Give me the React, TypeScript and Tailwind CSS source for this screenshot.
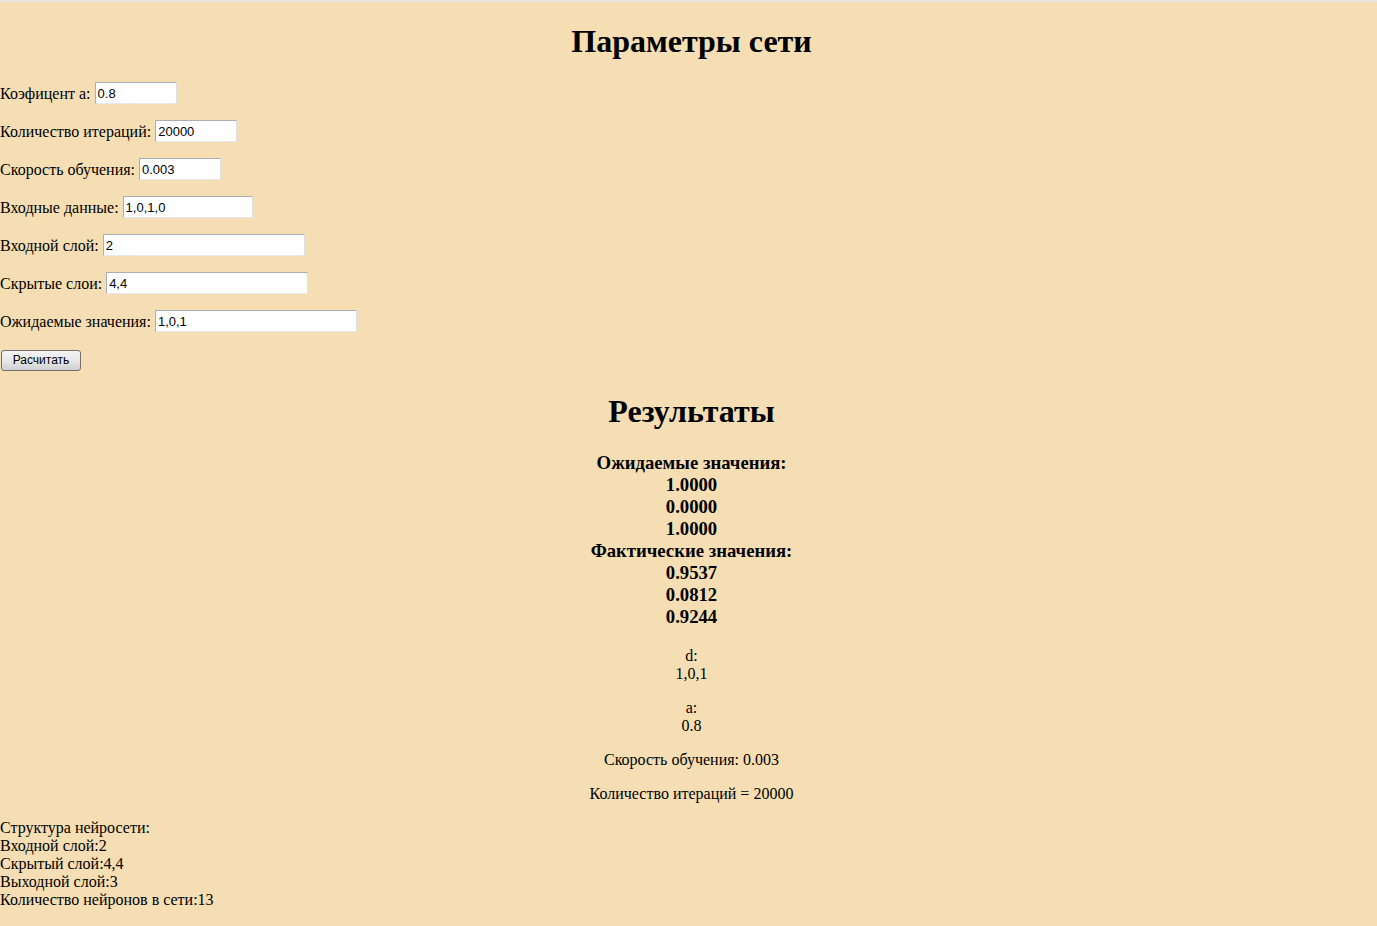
import React from "react";

const serif = "font-['Liberation_Serif','Times_New_Roman',serif]";
const inputCls =
  "h-[22px] border border-t-[#abadb3] border-l-[#abadb3] border-r-[#dbdfe6] border-b-[#e3e9ef] bg-white px-[2px] pt-px text-[13px] text-black font-['Liberation_Sans',Arial,sans-serif] outline-none";

const params = [
  { label: "Коэфицент а:", value: "0.8", w: "w-[82px]" },
  { label: "Количество итераций:", value: "20000", w: "w-[82px]" },
  { label: "Скорость обучения:", value: "0.003", w: "w-[82px]" },
  { label: "Входные данные:", value: "1,0,1,0", w: "w-[130px]" },
  { label: "Входной слой:", value: "2", w: "w-[202px]" },
  { label: "Скрытые слои:", value: "4,4", w: "w-[202px]" },
  { label: "Ожидаемые значения:", value: "1,0,1", w: "w-[202px]" },
];

export default function App() {
  return (
    <div className={`min-h-[926px] bg-[#f5deb3] border-t-2 border-[#e4e4e4] text-black text-[16px] ${serif}`}>
      <h1 className="mt-[21px] mb-[22px] pl-[6px] text-center text-[32px] font-bold leading-[37px]">
        Параметры сети
      </h1>

      <div className="flex flex-col gap-4">
        {params.map((p) => (
          <p key={p.label} className="h-[22px] flex items-center gap-[4px] leading-[22px]">
            <span className="mt-[2px]">{p.label}</span>
            <input className={`${inputCls} ${p.w}`} defaultValue={p.value} />
          </p>
        ))}
        <p className="h-[24px] flex items-center pl-px">
          <button className="h-[21px] w-[80px] rounded-[3px] border border-[#707070] bg-gradient-to-b from-[#f4f4f4] via-[#e8e8e8] to-[#d0d0d0] text-[12px] leading-none text-black font-['Liberation_Sans',Arial,sans-serif]">
            Расчитать
          </button>
        </p>
      </div>

      <h1 className="mt-[21px] pl-[6px] text-center text-[32px] font-bold leading-[37px]">Результаты</h1>

      <div className="mt-[22px] pl-[6px] text-center text-[18.72px] font-bold leading-[22px]">
        <div>Ожидаемые значения:</div>
        <div>1.0000</div>
        <div>0.0000</div>
        <div>1.0000</div>
        <div>Фактические значения:</div>
        <div>0.9537</div>
        <div>0.0812</div>
        <div>0.9244</div>
      </div>

      <div className="mt-[19px] pl-[6px] text-center leading-[18px] flex flex-col gap-4">
        <p>
          d:
          <br />
          1,0,1
        </p>
        <p>
          a:
          <br />
          0.8
        </p>
        <p>Скорость обучения: 0.003</p>
        <p>Количество итераций = 20000</p>
      </div>

      <div className="mt-4 leading-[18px]">
        <div>Структура нейросети:</div>
        <div>Входной слой:2</div>
        <div>Скрытый слой:4,4</div>
        <div>Выходной слой:3</div>
        <div>Количество нейронов в сети:13</div>
      </div>
    </div>
  );
}
